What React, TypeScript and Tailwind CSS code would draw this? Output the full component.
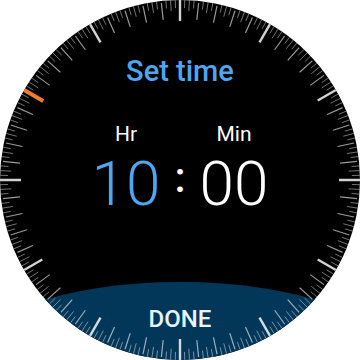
const TICKS = Array.from({ length: 240 }, (_, i) => i);

function Ticks() {
  return (
    <svg
      viewBox="0 0 360 360"
      className="absolute inset-0 w-full h-full pointer-events-none"
    >
      {TICKS.map((i) => {
        const deg = i * 1.5;
        const a = (deg * Math.PI) / 180;
        const isHour = i % 20 === 0;
        const isMajor = i % 4 === 0;
        const isCurrent = i === 200;
        let r1 = 180;
        let r2 = 172;
        let stroke = "rgba(255,255,255,0.45)";
        let width = 1;
        if (isCurrent) {
          r2 = 158;
          stroke = "#f27b2c";
          width = 4;
        } else if (isHour) {
          r2 = 159;
          stroke = "rgba(255,255,255,0.82)";
          width = 2.4;
        } else if (isMajor) {
          r1 = 178;
          r2 = 161;
          stroke = "rgba(255,255,255,0.6)";
          width = 1.2;
        } else if (i % 2 === 0) {
          r2 = 169;
        }
        const sx = Math.sin(a);
        const sy = -Math.cos(a);
        return (
          <line
            key={i}
            x1={180 + sx * r1}
            y1={180 + sy * r1}
            x2={180 + sx * r2}
            y2={180 + sy * r2}
            stroke={stroke}
            strokeWidth={width}
          />
        );
      })}
    </svg>
  );
}

export default function App() {
  return (
    <div className="w-[360px] h-[360px] bg-white font-['Roboto','Liberation_Sans',sans-serif]">
      <div className="relative w-full h-full rounded-full bg-black overflow-hidden flex flex-col items-center">
        <h1 className="mt-[57px] text-[29px] leading-none font-medium text-[#4ea5f0]">
          Set time
        </h1>

        <div className="mt-[38px] grid grid-cols-[88px_20px_88px] text-white">
          <span className="text-center text-[21px] leading-none">Hr</span>
          <span />
          <span className="text-center text-[21px] leading-none">Min</span>
        </div>

        <div className="mt-[8px] grid grid-cols-[88px_20px_88px] items-start">
          <span className="text-center text-[62px] leading-none font-light text-[#4ea5f0]">
            10
          </span>
          <span className="mt-[4px] text-center text-[42px] leading-none font-medium text-white">
            :
          </span>
          <span className="text-center text-[62px] leading-none font-light text-white">
            00
          </span>
        </div>

        <button className="mt-auto h-[78px] w-[428px] shrink-0 rounded-t-[50%_100%] bg-[#033759] pt-[25px] flex justify-center">
          <span className="text-[24px] leading-none font-medium text-[#e8f4fb]">
            DONE
          </span>
        </button>

        <Ticks />
      </div>
    </div>
  );
}
